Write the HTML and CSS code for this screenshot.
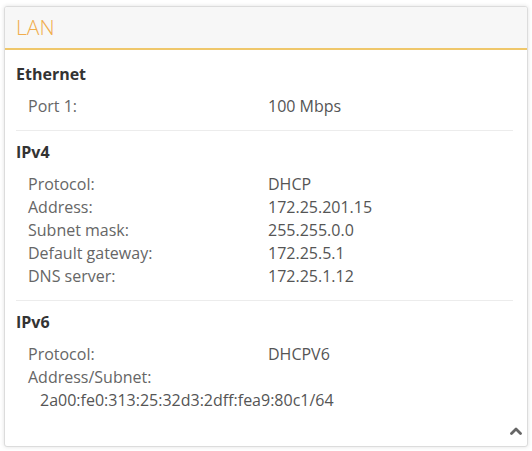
FILE: index.html
```html
<!DOCTYPE html>
<html lang="en">
<head>
<meta charset="utf-8">
<title>LAN</title>
<link rel="stylesheet" href="styles.css">
</head>
<body>
<div class="card">
  <div class="card-header">LAN</div>
  <div class="card-body">
    <section class="group first">
      <h3 class="group-title">Ethernet</h3>
      <div class="row"><span class="label">Port 1:</span><span class="value">100 Mbps</span></div>
    </section>
    <section class="group">
      <h3 class="group-title">IPv4</h3>
      <div class="row"><span class="label">Protocol:</span><span class="value">DHCP</span></div>
      <div class="row"><span class="label">Address:</span><span class="value">172.25.201.15</span></div>
      <div class="row"><span class="label">Subnet mask:</span><span class="value">255.255.0.0</span></div>
      <div class="row"><span class="label">Default gateway:</span><span class="value">172.25.5.1</span></div>
      <div class="row"><span class="label">DNS server:</span><span class="value">172.25.1.12</span></div>
    </section>
    <section class="group last">
      <h3 class="group-title">IPv6</h3>
      <div class="row"><span class="label">Protocol:</span><span class="value">DHCPV6</span></div>
      <div class="row"><span class="label">Address/Subnet:</span></div>
      <div class="row sub">2a00:fe0:313:25:32d3:2dff:fea9:80c1/64</div>
    </section>
  </div>
  <div class="card-footer">
    <svg class="chevron" width="12" height="8" viewBox="0 0 12 8" aria-hidden="true">
      <polyline points="1.5,6.5 6,2 10.5,6.5" fill="none" stroke="#666" stroke-width="2.8" stroke-linecap="round" stroke-linejoin="round"/>
    </svg>
  </div>
</div>
</body>
</html>
```

FILE: styles.css
```css
html, body {
  margin: 0;
  padding: 0;
  background: #ffffff;
}

body {
  font-family: "Open Sans", "Liberation Sans", sans-serif;
  font-size: 16px;
  color: #555;
  padding: 6px 4px 3px 4px;
}

.card {
  border: 1px solid #dcdcdc;
  border-radius: 3px;
  box-shadow: 0 0 4px rgba(0, 0, 0, 0.12);
  background: #fff;
  overflow: hidden;
}

.card-header {
  height: 41px;
  line-height: 41px;
  padding-left: 11px;
  background: #f7f7f7;
  border-bottom: 2px solid #efc76a;
  color: #f0ad4e;
  font-size: 21px;
  font-weight: 300;
}

.card-body {
  padding: 0 14px 0 11px;
}

.group {
  padding: 10px 0 12px 0;
  border-top: 1px solid #ececec;
}

.group.first {
  border-top: none;
  padding-top: 13px;
}

.group.last {
  padding-bottom: 0;
}

.group-title {
  margin: 0 0 9px 0;
  font-size: 16px;
  font-weight: 700;
  line-height: 23px;
  color: #333;
}

.row {
  display: flex;
  line-height: 23px;
  padding-left: 12px;
}

.label {
  width: 240px;
  flex: none;
  color: #666;
}

.value {
  color: #555;
}

.row.sub {
  padding-left: 24px;
  color: #555;
}

.card-footer {
  height: 34px;
  display: flex;
  justify-content: flex-end;
  align-items: center;
  padding-right: 5px;
}

.chevron {
  display: block;
  margin-top: 4px;
}
```
